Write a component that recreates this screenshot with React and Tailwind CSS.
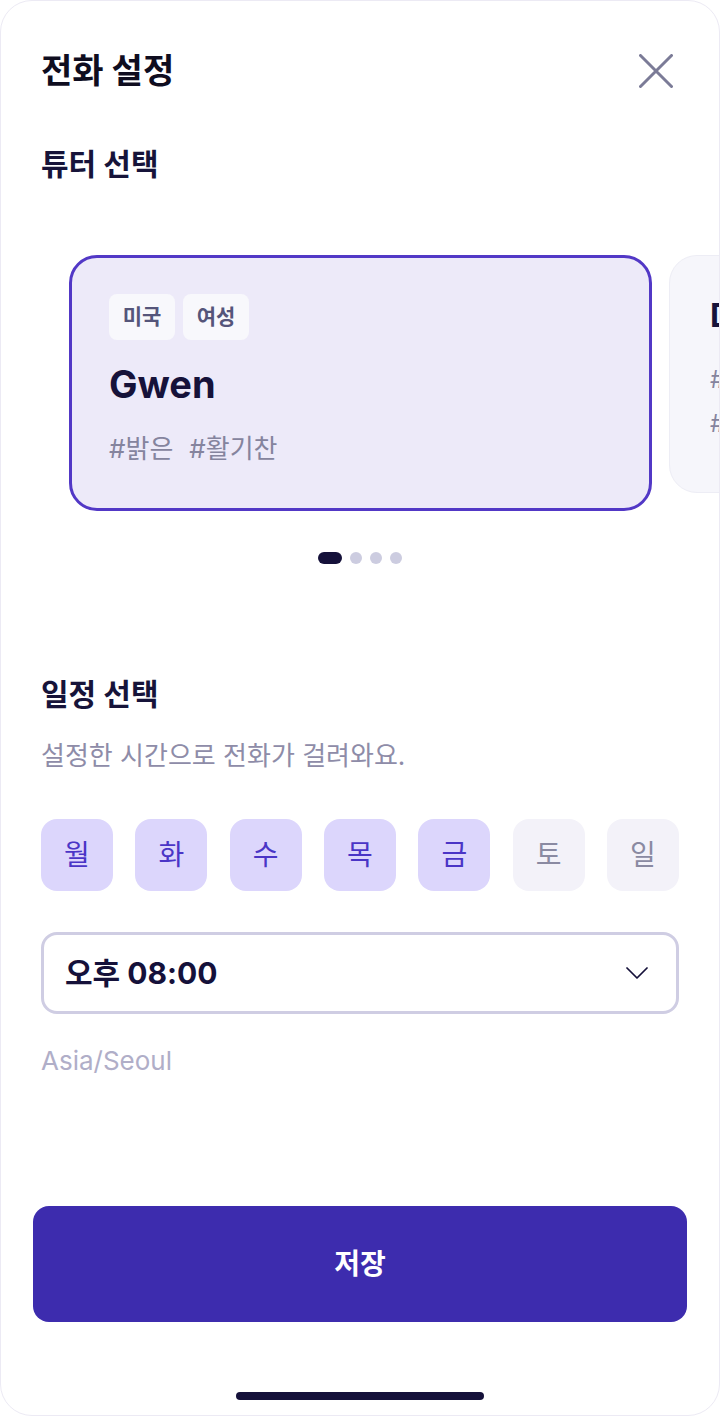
import React from "react";

const FONT = { fontFamily: '"Inter", "Noto Sans CJK KR", sans-serif' };

function DayButton({ label, active }) {
  return (
    <div
      className={
        "w-[72px] h-[72px] rounded-[16px] flex items-center justify-center text-[28px] leading-none " +
        (active ? "bg-[#dcd6fc] text-[#4a35c6]" : "bg-[#f3f2f9] text-[#8a8aa2]")
      }
    >
      {label}
    </div>
  );
}

export default function App() {
  const days = [
    ["월", true],
    ["화", true],
    ["수", true],
    ["목", true],
    ["금", true],
    ["토", false],
    ["일", false],
  ];
  return (
    <div style={FONT} className="w-[720px] h-[1416px] bg-white">
      <div className="w-[720px] h-[1416px] rounded-[32px] border border-[#eceaf4] bg-white overflow-hidden flex flex-col">
        {/* Header */}
        <div className="pt-[49px] pl-10 pr-[46px] flex items-center justify-between">
          <h1 className="text-[34px] leading-[42px] font-bold text-[#0f0d1f]">전화 설정</h1>
          <svg width="34" height="34" viewBox="0 0 34 34" fill="none">
            <path d="M1.5 1.5L32.5 32.5M32.5 1.5L1.5 32.5" stroke="#7b7b97" strokeWidth="3" strokeLinecap="round" />
          </svg>
        </div>

        {/* Tutor select */}
        <h2 className="mt-[53px] px-10 text-[30px] leading-[38px] font-bold text-[#17143a]">튜터 선택</h2>

        <div className="mt-[72px] pl-[68px] flex items-start gap-[17px] overflow-hidden">
          <div className="shrink-0 w-[583px] h-[256px] rounded-[28px] border-[3px] border-[#5238c6] bg-[#edeaf9] pt-[36px] px-[37px]">
            <div className="flex gap-2">
              <span className="h-[46px] w-[66px] rounded-[8px] bg-[#f8f8fc] flex items-center justify-center text-[21px] font-semibold text-[#55557a]">미국</span>
              <span className="h-[46px] w-[66px] rounded-[8px] bg-[#f8f8fc] flex items-center justify-center text-[21px] font-semibold text-[#55557a]">여성</span>
            </div>
            <div className="mt-[21px] text-[38px] leading-[46px] font-bold text-[#16123a]">Gwen</div>
            <div className="mt-[26px] flex gap-4 text-[26px] leading-[32px] text-[#85849e]">
              <span>#밝은</span>
              <span>#활기찬</span>
            </div>
          </div>
          <div className="shrink-0 w-[300px] h-[238px] rounded-[28px] border border-[#ededf5] bg-[#f6f6fb] pt-[40px] px-[40px]">
            <div className="text-[32px] leading-[40px] font-bold text-[#16123a]">Daniel</div>
            <div className="mt-[22px] text-[24px] leading-[44px] text-[#85849e]">
              <div>#차분한</div>
              <div>#친절한</div>
            </div>
          </div>
        </div>

        {/* Dots */}
        <div className="mt-[41px] flex justify-center items-center gap-2">
          <span className="w-6 h-3 rounded-full bg-[#15113a]" />
          <span className="w-3 h-3 rounded-full bg-[#cccce0]" />
          <span className="w-3 h-3 rounded-full bg-[#cccce0]" />
          <span className="w-3 h-3 rounded-full bg-[#cccce0]" />
        </div>

        {/* Schedule */}
        <h2 className="mt-[111px] px-10 text-[30px] leading-[38px] font-bold text-[#17143a]">일정 선택</h2>
        <p className="mt-[26px] px-10 text-[26px] leading-[34px] text-[#8e8ca8]">설정한 시간으로 전화가 걸려와요.</p>

        <div className="mt-[46px] px-10 flex justify-between">
          {days.map(([d, a]) => (
            <DayButton key={d} label={d} active={a} />
          ))}
        </div>

        <div className="mt-[41px] mx-10 h-[82px] rounded-[16px] border-[3px] border-[#cfcde3] flex items-center justify-between pl-[21px] pr-[28px]">
          <span className="text-[30px] leading-none font-bold text-[#15113a]">오후 08:00</span>
          <svg width="22" height="12" viewBox="0 0 22 12" fill="none">
            <path d="M1 1L11 11L21 1" stroke="#15113a" strokeWidth="1.75" strokeLinecap="round" strokeLinejoin="round" />
          </svg>
        </div>

        <div className="mt-[30px] px-10 text-[26px] leading-[34px] text-[#b0aec8]">Asia/Seoul</div>

        {/* Save */}
        <div className="mt-auto mx-8">
          <button className="w-full h-[116px] rounded-[16px] bg-[#3d2cae] text-white text-[28px] font-bold">저장</button>
        </div>
        <div className="mt-[70px] mb-[15px] flex justify-center">
          <span className="w-[248px] h-2 rounded-full bg-[#15113a]" />
        </div>
      </div>
    </div>
  );
}
